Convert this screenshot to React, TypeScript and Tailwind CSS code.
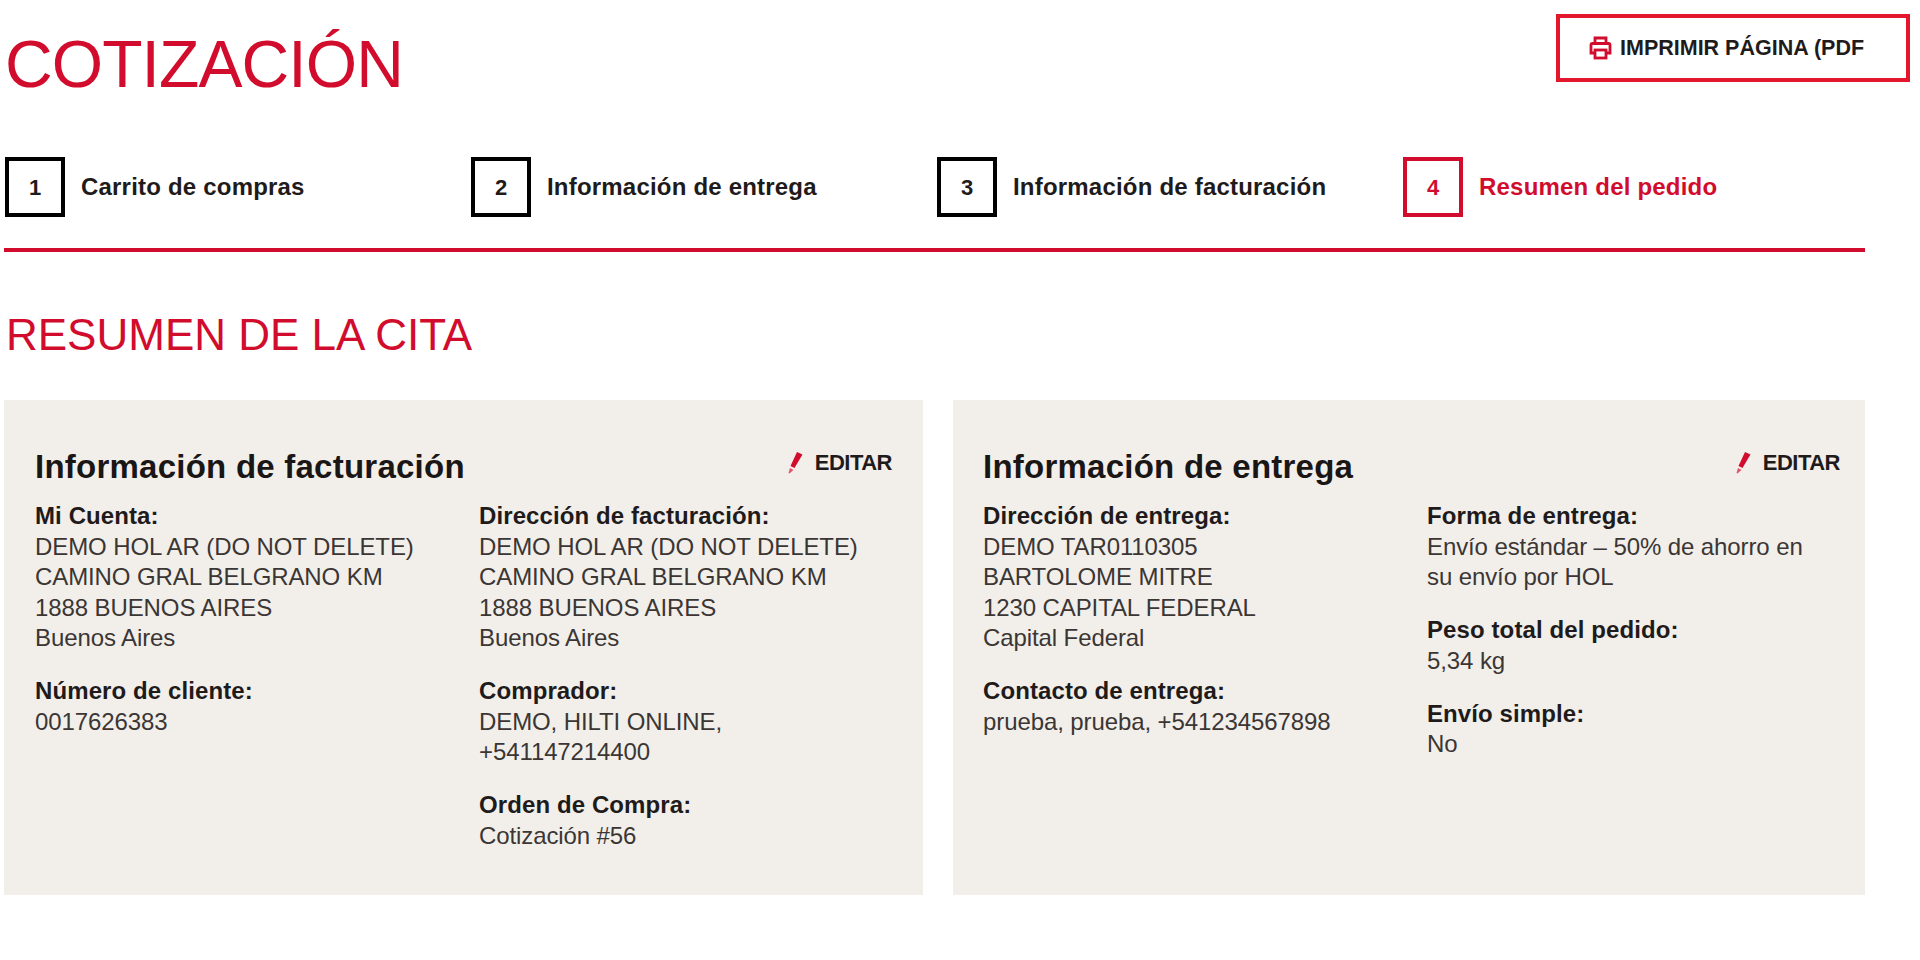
const steps = [
  { n: 1, label: "Carrito de compras" },
  { n: 2, label: "Información de entrega" },
  { n: 3, label: "Información de facturación" },
  { n: 4, label: "Resumen del pedido", active: true },
];

type Block = { title: string; lines: string[] };

function InfoBlock({ title, lines }: Block) {
  return (
    <div className="mb-[22.5px]">
      <div className="font-bold text-[#1f1b1b] text-[24px] leading-[30.5px] tracking-[0.1px]">{title}</div>
      {lines.map((l) => (
        <div key={l} className="leading-[30.5px] text-[24px] text-[#3b3634] tracking-[-0.1px]">
          {l}
        </div>
      ))}
    </div>
  );
}

function Pencil() {
  return (
    <svg width="16" height="24" viewBox="0 0 16 24" className="mr-[12px]">
      <path d="M10 1 L15.5 3.5 L7.5 17 L3.5 15 Z" fill="#d10c2c" />
      <path d="M3 17 L6.5 19 L2.5 22.5 L1.5 22 Z" fill="#e0566a" />
    </svg>
  );
}

function PrinterIcon() {
  return (
    <svg width="23" height="24" viewBox="0 0 23 24" fill="none" stroke="#d10c2c" strokeWidth="2.8" className="mr-[8px] shrink-0">
      <path d="M6 7 V2 H17 V7" />
      <path d="M5.5 17 H2 V9 Q2 7.5 3.5 7.5 H19.5 Q21 7.5 21 9 V17 H17.5" />
      <rect x="6" y="14" width="11" height="8" />
    </svg>
  );
}

function Card({
  title,
  width,
  padding,
  left,
  right,
}: {
  title: string;
  width: string;
  padding: string;
  left: Block[];
  right: Block[];
}) {
  return (
    <div className={`${width} ${padding} h-[495px] bg-[#f2efeb] pt-[47px]`}>
      <div className="flex justify-between items-start">
        <h2 className="text-[33px] leading-[40px] font-bold text-[#1a1616] tracking-[0.24px]">{title}</h2>
        <div className="flex items-center text-[22px] leading-[26px] font-bold text-[#1f1b1b] tracking-[-0.5px] mt-[3px]">
          <Pencil />
          EDITAR
        </div>
      </div>
      <div className="grid grid-cols-[444px_1fr] mt-[14px]">
        <div>
          {left.map((b) => (
            <InfoBlock key={b.title} {...b} />
          ))}
        </div>
        <div>
          {right.map((b) => (
            <InfoBlock key={b.title} {...b} />
          ))}
        </div>
      </div>
    </div>
  );
}

export default function App() {
  return (
    <div className="w-[1920px] h-[960px] bg-white overflow-hidden font-['Liberation_Sans',Arial,sans-serif] pl-[4px]">
      <div className="flex justify-between items-start h-[157px]">
        <h1 className="text-[#d10c2c] text-[66px] leading-[76px] mt-[26px] ml-[1px] tracking-[-0.9px]">COTIZACIÓN</h1>
        <div className="w-[354px] h-[68px] mt-[14px] mr-[10px] border-[4px] border-[#e3172c] flex items-center pl-[29px] shrink-0">
          <PrinterIcon />
          <div className="w-[244px] overflow-hidden whitespace-nowrap text-[21.5px] font-bold text-[#1f1b1b]">
            IMPRIMIR PÁGINA (PDF)
          </div>
        </div>
      </div>

      <div className="w-[1861px] h-[95px] border-b-[4px] border-[#d10c2c] flex pl-[1px]">
        {steps.map((s) => (
          <div key={s.n} className="w-[466px] shrink-0 flex items-start">
            <div
              className={`w-[60px] h-[60px] border-[4px] flex items-center justify-center text-[22px] font-bold ${
                s.active ? "border-[#d10c2c] text-[#d10c2c]" : "border-black text-[#1f1b1b]"
              }`}
            >
              {s.n}
            </div>
            <div
              className={`ml-[16px] h-[60px] flex items-center text-[24px] tracking-[0.2px] font-bold ${
                s.active ? "text-[#d10c2c]" : "text-[#1f1b1b]"
              }`}
            >
              {s.label}
            </div>
          </div>
        ))}
      </div>

      <h2 className="text-[#d10c2c] text-[44px] leading-[50px] mt-[58px] ml-[2px]">RESUMEN DE LA CITA</h2>

      <div className="flex gap-[30px] mt-[40px]">
        <Card
          title="Información de facturación"
          width="w-[919px]"
          padding="pl-[31px] pr-[31px]"
          left={[
            {
              title: "Mi Cuenta:",
              lines: ["DEMO HOL AR (DO NOT DELETE)", "CAMINO GRAL BELGRANO KM", "1888 BUENOS AIRES", "Buenos Aires"],
            },
            { title: "Número de cliente:", lines: ["0017626383"] },
          ]}
          right={[
            {
              title: "Dirección de facturación:",
              lines: ["DEMO HOL AR (DO NOT DELETE)", "CAMINO GRAL BELGRANO KM", "1888 BUENOS AIRES", "Buenos Aires"],
            },
            { title: "Comprador:", lines: ["DEMO, HILTI ONLINE,", "+541147214400"] },
            { title: "Orden de Compra:", lines: ["Cotización #56"] },
          ]}
        />
        <Card
          title="Información de entrega"
          width="w-[912px]"
          padding="pl-[30px] pr-[25px]"
          left={[
            {
              title: "Dirección de entrega:",
              lines: ["DEMO TAR0110305", "BARTOLOME MITRE", "1230 CAPITAL FEDERAL", "Capital Federal"],
            },
            { title: "Contacto de entrega:", lines: ["prueba, prueba, +541234567898"] },
          ]}
          right={[
            { title: "Forma de entrega:", lines: ["Envío estándar – 50% de ahorro en", "su envío por HOL"] },
            { title: "Peso total del pedido:", lines: ["5,34 kg"] },
            { title: "Envío simple:", lines: ["No"] },
          ]}
        />
      </div>
    </div>
  );
}
